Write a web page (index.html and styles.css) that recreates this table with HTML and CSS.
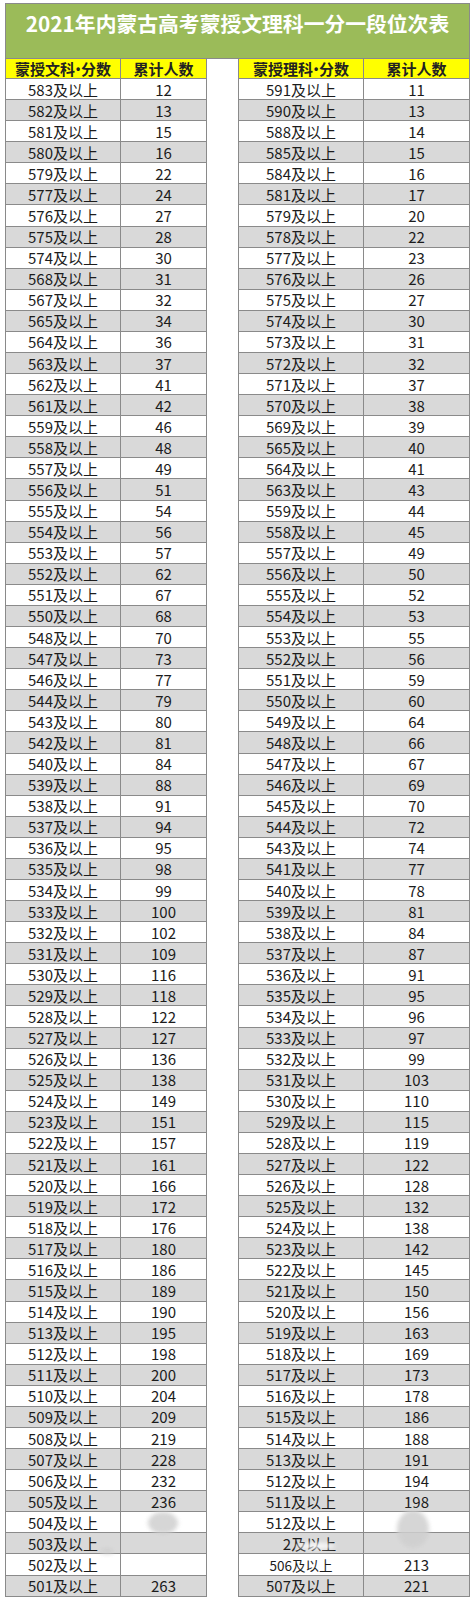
FILE: index.html
```html
<!DOCTYPE html>
<html lang="zh-CN">
<head>
<meta charset="utf-8">
<title>2021年内蒙古高考蒙授文理科一分一段位次表</title>
<link rel="stylesheet" href="styles.css">
</head>
<body>
<div class="sheet">
  <div class="title">2021年内蒙古高考蒙授文理科一分一段位次表</div>
  <div class="tables">
    <div class="tbl tbl-left">
      <div class="hd">蒙授文科<span class="dot">•</span>分数</div><div class="hd">累计人数</div>
      <div class="c">583及以上</div><div class="c">12</div>
      <div class="c">582及以上</div><div class="c">13</div>
      <div class="c">581及以上</div><div class="c">15</div>
      <div class="c">580及以上</div><div class="c">16</div>
      <div class="c">579及以上</div><div class="c">22</div>
      <div class="c">577及以上</div><div class="c">24</div>
      <div class="c">576及以上</div><div class="c">27</div>
      <div class="c">575及以上</div><div class="c">28</div>
      <div class="c">574及以上</div><div class="c">30</div>
      <div class="c">568及以上</div><div class="c">31</div>
      <div class="c">567及以上</div><div class="c">32</div>
      <div class="c">565及以上</div><div class="c">34</div>
      <div class="c">564及以上</div><div class="c">36</div>
      <div class="c">563及以上</div><div class="c">37</div>
      <div class="c">562及以上</div><div class="c">41</div>
      <div class="c">561及以上</div><div class="c">42</div>
      <div class="c">559及以上</div><div class="c">46</div>
      <div class="c">558及以上</div><div class="c">48</div>
      <div class="c">557及以上</div><div class="c">49</div>
      <div class="c">556及以上</div><div class="c">51</div>
      <div class="c">555及以上</div><div class="c">54</div>
      <div class="c">554及以上</div><div class="c">56</div>
      <div class="c">553及以上</div><div class="c">57</div>
      <div class="c">552及以上</div><div class="c">62</div>
      <div class="c">551及以上</div><div class="c">67</div>
      <div class="c">550及以上</div><div class="c">68</div>
      <div class="c">548及以上</div><div class="c">70</div>
      <div class="c">547及以上</div><div class="c">73</div>
      <div class="c">546及以上</div><div class="c">77</div>
      <div class="c">544及以上</div><div class="c">79</div>
      <div class="c">543及以上</div><div class="c">80</div>
      <div class="c">542及以上</div><div class="c">81</div>
      <div class="c">540及以上</div><div class="c">84</div>
      <div class="c">539及以上</div><div class="c">88</div>
      <div class="c">538及以上</div><div class="c">91</div>
      <div class="c">537及以上</div><div class="c">94</div>
      <div class="c">536及以上</div><div class="c">95</div>
      <div class="c">535及以上</div><div class="c">98</div>
      <div class="c">534及以上</div><div class="c">99</div>
      <div class="c">533及以上</div><div class="c">100</div>
      <div class="c">532及以上</div><div class="c">102</div>
      <div class="c">531及以上</div><div class="c">109</div>
      <div class="c">530及以上</div><div class="c">116</div>
      <div class="c">529及以上</div><div class="c">118</div>
      <div class="c">528及以上</div><div class="c">122</div>
      <div class="c">527及以上</div><div class="c">127</div>
      <div class="c">526及以上</div><div class="c">136</div>
      <div class="c">525及以上</div><div class="c">138</div>
      <div class="c">524及以上</div><div class="c">149</div>
      <div class="c">523及以上</div><div class="c">151</div>
      <div class="c">522及以上</div><div class="c">157</div>
      <div class="c">521及以上</div><div class="c">161</div>
      <div class="c">520及以上</div><div class="c">166</div>
      <div class="c">519及以上</div><div class="c">172</div>
      <div class="c">518及以上</div><div class="c">176</div>
      <div class="c">517及以上</div><div class="c">180</div>
      <div class="c">516及以上</div><div class="c">186</div>
      <div class="c">515及以上</div><div class="c">189</div>
      <div class="c">514及以上</div><div class="c">190</div>
      <div class="c">513及以上</div><div class="c">195</div>
      <div class="c">512及以上</div><div class="c">198</div>
      <div class="c">511及以上</div><div class="c">200</div>
      <div class="c">510及以上</div><div class="c">204</div>
      <div class="c">509及以上</div><div class="c">209</div>
      <div class="c">508及以上</div><div class="c">219</div>
      <div class="c">507及以上</div><div class="c">228</div>
      <div class="c">506及以上</div><div class="c">232</div>
      <div class="c">505及以上</div><div class="c">236</div>
      <div class="c">504及以上</div><div class="c"></div>
      <div class="c">503及以上</div><div class="c"></div>
      <div class="c">502及以上</div><div class="c"></div>
      <div class="c">501及以上</div><div class="c">263</div>
    </div>
    <div class="spacer"></div>
    <div class="tbl tbl-right">
      <div class="hd">蒙授理科<span class="dot">•</span>分数</div><div class="hd">累计人数</div>
      <div class="c">591及以上</div><div class="c">11</div>
      <div class="c">590及以上</div><div class="c">13</div>
      <div class="c">588及以上</div><div class="c">14</div>
      <div class="c">585及以上</div><div class="c">15</div>
      <div class="c">584及以上</div><div class="c">16</div>
      <div class="c">581及以上</div><div class="c">17</div>
      <div class="c">579及以上</div><div class="c">20</div>
      <div class="c">578及以上</div><div class="c">22</div>
      <div class="c">577及以上</div><div class="c">23</div>
      <div class="c">576及以上</div><div class="c">26</div>
      <div class="c">575及以上</div><div class="c">27</div>
      <div class="c">574及以上</div><div class="c">30</div>
      <div class="c">573及以上</div><div class="c">31</div>
      <div class="c">572及以上</div><div class="c">32</div>
      <div class="c">571及以上</div><div class="c">37</div>
      <div class="c">570及以上</div><div class="c">38</div>
      <div class="c">569及以上</div><div class="c">39</div>
      <div class="c">565及以上</div><div class="c">40</div>
      <div class="c">564及以上</div><div class="c">41</div>
      <div class="c">563及以上</div><div class="c">43</div>
      <div class="c">559及以上</div><div class="c">44</div>
      <div class="c">558及以上</div><div class="c">45</div>
      <div class="c">557及以上</div><div class="c">49</div>
      <div class="c">556及以上</div><div class="c">50</div>
      <div class="c">555及以上</div><div class="c">52</div>
      <div class="c">554及以上</div><div class="c">53</div>
      <div class="c">553及以上</div><div class="c">55</div>
      <div class="c">552及以上</div><div class="c">56</div>
      <div class="c">551及以上</div><div class="c">59</div>
      <div class="c">550及以上</div><div class="c">60</div>
      <div class="c">549及以上</div><div class="c">64</div>
      <div class="c">548及以上</div><div class="c">66</div>
      <div class="c">547及以上</div><div class="c">67</div>
      <div class="c">546及以上</div><div class="c">69</div>
      <div class="c">545及以上</div><div class="c">70</div>
      <div class="c">544及以上</div><div class="c">72</div>
      <div class="c">543及以上</div><div class="c">74</div>
      <div class="c">541及以上</div><div class="c">77</div>
      <div class="c">540及以上</div><div class="c">78</div>
      <div class="c">539及以上</div><div class="c">81</div>
      <div class="c">538及以上</div><div class="c">84</div>
      <div class="c">537及以上</div><div class="c">87</div>
      <div class="c">536及以上</div><div class="c">91</div>
      <div class="c">535及以上</div><div class="c">95</div>
      <div class="c">534及以上</div><div class="c">96</div>
      <div class="c">533及以上</div><div class="c">97</div>
      <div class="c">532及以上</div><div class="c">99</div>
      <div class="c">531及以上</div><div class="c">103</div>
      <div class="c">530及以上</div><div class="c">110</div>
      <div class="c">529及以上</div><div class="c">115</div>
      <div class="c">528及以上</div><div class="c">119</div>
      <div class="c">527及以上</div><div class="c">122</div>
      <div class="c">526及以上</div><div class="c">128</div>
      <div class="c">525及以上</div><div class="c">132</div>
      <div class="c">524及以上</div><div class="c">138</div>
      <div class="c">523及以上</div><div class="c">142</div>
      <div class="c">522及以上</div><div class="c">145</div>
      <div class="c">521及以上</div><div class="c">150</div>
      <div class="c">520及以上</div><div class="c">156</div>
      <div class="c">519及以上</div><div class="c">163</div>
      <div class="c">518及以上</div><div class="c">169</div>
      <div class="c">517及以上</div><div class="c">173</div>
      <div class="c">516及以上</div><div class="c">178</div>
      <div class="c">515及以上</div><div class="c">186</div>
      <div class="c">514及以上</div><div class="c">188</div>
      <div class="c">513及以上</div><div class="c">191</div>
      <div class="c">512及以上</div><div class="c">194</div>
      <div class="c">511及以上</div><div class="c">198</div>
      <div class="c">512及以上</div><div class="c"></div>
      <div class="c c-shift">2及以上</div><div class="c"></div>
      <div class="c c-small">506及以上</div><div class="c">213</div>
      <div class="c">507及以上</div><div class="c">221</div>
    </div>
  </div>
  <div class="blot blot-a"></div>
  <div class="blot blot-b"></div>
  <div class="blot blot-c"></div>
  <div class="blot blot-d"></div>
</div>
</body>
</html>
```

FILE: styles.css
```css
html, body {
  margin: 0;
  padding: 0;
  background: #ffffff;
}
body {
  padding: 3px 0 0 5px;
  font-family: "Noto Sans CJK SC", "Noto Sans", sans-serif;
  color: #1c1c1c;
}
.sheet {
  position: relative;
  width: 465px;
}
.title {
  box-sizing: border-box;
  height: 56px;
  background: #9bbb59;
  border: 1px solid #8a8a8a;
  color: #ffffff;
  font-weight: 700;
  font-size: 20.8px;
  line-height: 28px;
  padding-top: 5px;
  text-align: center;
  white-space: nowrap;
}
.tables {
  display: flex;
}
.spacer {
  width: 31px;
  flex: none;
}
.tbl {
  display: grid;
  grid-template-rows: 20px repeat(72, 21.08px);
  border-left: 1px solid #8a8a8a;
  flex: none;
}
.tbl-left {
  grid-template-columns: 115px 86px;
}
.tbl-right {
  grid-template-columns: 125px 106px;
}
.hd, .c {
  box-sizing: border-box;
  border-right: 1px solid #8a8a8a;
  border-bottom: 1px solid #8a8a8a;
  display: flex;
  align-items: center;
  justify-content: center;
  font-size: 15px;
  line-height: 1;
  white-space: nowrap;
}
.hd {
  background: #ffff00;
  font-weight: 700;
  color: #222222;
}
.dot {
  font-family: "Liberation Sans", sans-serif;
  font-size: 12px;
  padding: 0 1px;
}
.c:nth-child(4n+5), .c:nth-child(4n+6) {
  background: #d9d9d9;
}
.c-shift {
  padding-left: 17px;
}
.c-small {
  font-size: 13.5px;
  padding-top: 3px;
}
.blot {
  position: absolute;
  background: #cfcfcf;
  border-radius: 50%;
  filter: blur(2px);
  opacity: 0.85;
}
.blot-a {
  left: 143px;
  top: 1509px;
  width: 30px;
  height: 22px;
}
.blot-b {
  left: 392px;
  top: 1507px;
  width: 32px;
  height: 38px;
}
.blot-c {
  left: 95px;
  top: 1545px;
  width: 14px;
  height: 6px;
}
.blot-d {
  left: 290px;
  top: 1540px;
  width: 40px;
  height: 6px;
  background: #ffffff;
}
```
